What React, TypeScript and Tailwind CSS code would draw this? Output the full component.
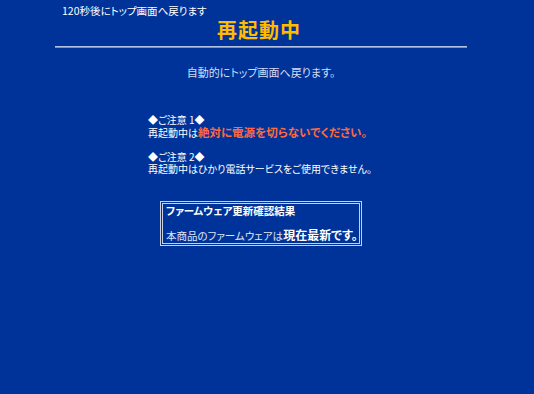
export default function App() {
  const f = "[font-family:'Noto_Sans_CJK_JP',sans-serif] [font-feature-settings:'palt']";
  return (
    <div className={`w-[534px] h-[394px] bg-[#003399] text-white overflow-hidden ${f}`}>
      <div className="pl-[62px] pt-[4px] h-[16px] text-[10.5px] leading-[14px]">120秒後にトップ画面へ戻ります</div>
      <div className="ml-[55px] w-[412px] flex flex-col items-center">
        <div className="mt-[2px] h-[24px] text-[20px] leading-[24px] font-bold text-[#ffbb00] tracking-[1px] -translate-x-[2px]">再起動中</div>
        <div className="mt-[4px] w-full h-[2px] border-t border-[#b4c0dc] border-b border-b-[#8090b8]"></div>
        <div className="mt-[17px] text-[11px] leading-[14px] text-[#d4dcf4]">自動的にトップ画面へ戻ります。</div>
      </div>
      <div className="ml-[148px] mt-[35px] text-[10px] leading-[12px] whitespace-nowrap">
        <div>◆ご注意 1◆</div>
        <div>再起動中は<span className="text-[#ff6a3d] font-bold text-[11.5px]">絶対に電源を切らないでください。</span></div>
        <div className="h-[12px]"></div>
        <div>◆ご注意 2◆</div>
        <div>再起動中はひかり電話サービスをご使用できません。</div>
      </div>
      <div className="ml-[160px] mt-[26px] w-[202px] border-[3px] border-double border-[#c8d0e4] px-[3px] whitespace-nowrap">
        <div className="text-[10.5px] leading-[14px] font-bold">ファームウェア更新確認結果</div>
        <div className="mt-[10px] text-[10.5px] leading-[14px] text-[#e0e6f6]">本商品のファームウェアは<span className="font-bold text-white text-[12px]">現在最新です。</span></div>
      </div>
    </div>
  );
}
